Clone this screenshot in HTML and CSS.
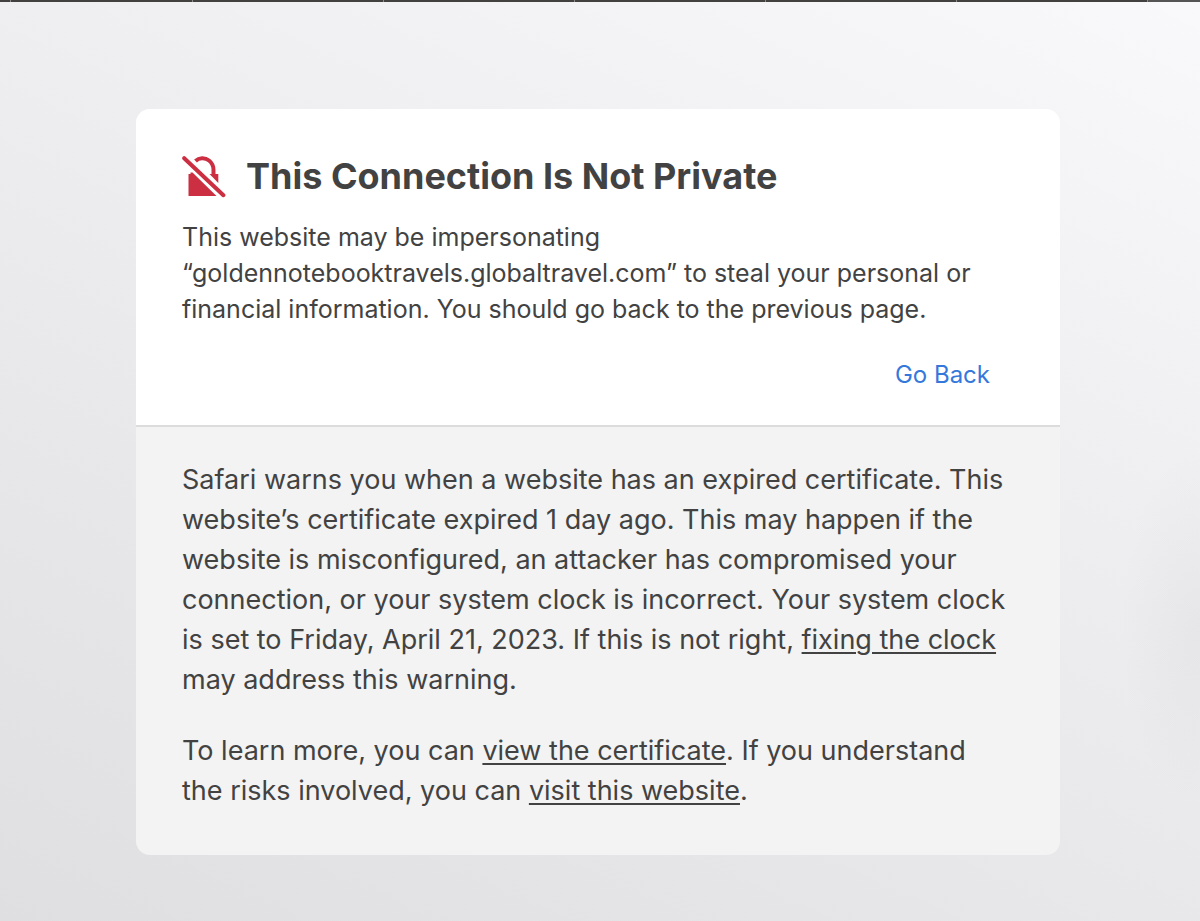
FILE: index.html
```html
<!DOCTYPE html>
<html lang="en">
<head>
    <meta charset="UTF-8">
    <meta name="viewport" content="width=device-width, initial-scale=1.0">
    <title>This Connection Is Not Private</title>
    <link rel="stylesheet" href="styles.css">
</head>
<body>
    <div class="tab-strip">
        <span class="edge"></span><span></span><span></span><span></span><span></span><span></span><span></span><span class="active"></span>
    </div>
    <main class="card">
        <section class="summary">
            <div class="title">
                <svg class="lock" viewBox="0 0 44 44" aria-hidden="true">
                    <path d="M13.5 7C17 3.6 23 3.3 27 6.5C30 8.9 31.5 12 31.5 16V21" fill="none" stroke="#cb2f41" stroke-width="4"/>
                    <path d="M27.5 20H36.3V29Z" fill="#cb2f41"/>
                    <path d="M6.5 20H8.5V18.5H10.5L34.5 42H6.5Z" fill="#cb2f41"/>
                    <path d="M2.2 4.2L41.4 41.2" stroke="#fff" stroke-width="8"/>
                    <path d="M2.2 4.2L41.4 41.2" stroke="#cb2f41" stroke-width="4" stroke-linecap="round"/>
                </svg>
                <h1>This Connection Is Not Private</h1>
            </div>
            <p>This website may be impersonating “goldennotebooktravels.globaltravel.com” to steal your personal or financial information. You should go back to the previous page.</p>
            <div class="actions">
                <button type="button" class="go-back">Go Back</button>
            </div>
        </section>
        <section class="details">
            <p>Safari warns you when a website has an expired certificate. This website’s certificate expired 1 day ago. This may happen if the website is misconfigured, an attacker has compromised your connection, or your system clock is incorrect. Your system clock is set to Friday, April 21, 2023. If this is not right, <a href="#">fixing the clock</a> may address this warning.</p>
            <p>To learn more, you can <a href="#">view the certificate</a>. If you understand the risks involved, you can <a href="#">visit this website</a>.</p>
        </section>
    </main>
</body>
</html>
```
FILE: styles.css
```css
* {
    box-sizing: border-box;
}
body {
    margin: 0;
    min-height: 100vh;
    font-family: Inter, "Liberation Sans", sans-serif;
    color: #424242;
    background:
        radial-gradient(ellipse 80px 180px at 100% 68%, rgba(120,120,125,0.06), rgba(120,120,125,0)),
        linear-gradient(24deg, #dfdfe1 0%, #e9e9eb 40%, #f1f1f3 72%, #f9f9fb 100%);
}
.tab-strip {
    display: flex;
    height: 2px;
    overflow: hidden;
    background-color: #434040;
}
.tab-strip span {
    flex: 0 1 191px;
    border-right: 1px solid #8a8a8a;
}
.tab-strip .edge {
    flex: 0 0 11px;
    margin-right: -9px;
}
.tab-strip .active {
    flex: 1 0 0;
    border-right: none;
    background-color: #555;
}
.card {
    margin: 107px 140px 66px 136px;
    border-radius: 14px;
    overflow: hidden;
    background-color: #f3f3f3;
}
.summary {
    padding: 43px 46px 32px;
    background-color: #fff;
    border-bottom: 2px solid #dcdcdc;
}
.title {
    display: flex;
    align-items: center;
    gap: 20px;
}
.lock {
    flex: none;
    width: 44px;
    height: 44px;
}
h1 {
    margin: 0;
    font-size: 36px;
    line-height: 48px;
    font-weight: 700;
}
.summary p {
    margin: 19px 0 0;
    font-size: 25px;
    line-height: 36px;
}
.actions {
    display: flex;
    justify-content: flex-end;
    margin-top: 30px;
    padding-right: 24px;
}
.go-back {
    padding: 0;
    border: none;
    background: none;
    font-family: inherit;
    font-size: 24px;
    line-height: 36px;
    color: #3478dc;
    cursor: pointer;
}
.details {
    padding: 33px 50px 44px 46px;
    font-size: 27px;
    line-height: 40px;
}
.details p {
    margin: 0;
}
.details p + p {
    margin-top: 31px;
}
.details a {
    color: inherit;
    text-decoration-thickness: 2px;
    text-underline-offset: 3px;
}
```
